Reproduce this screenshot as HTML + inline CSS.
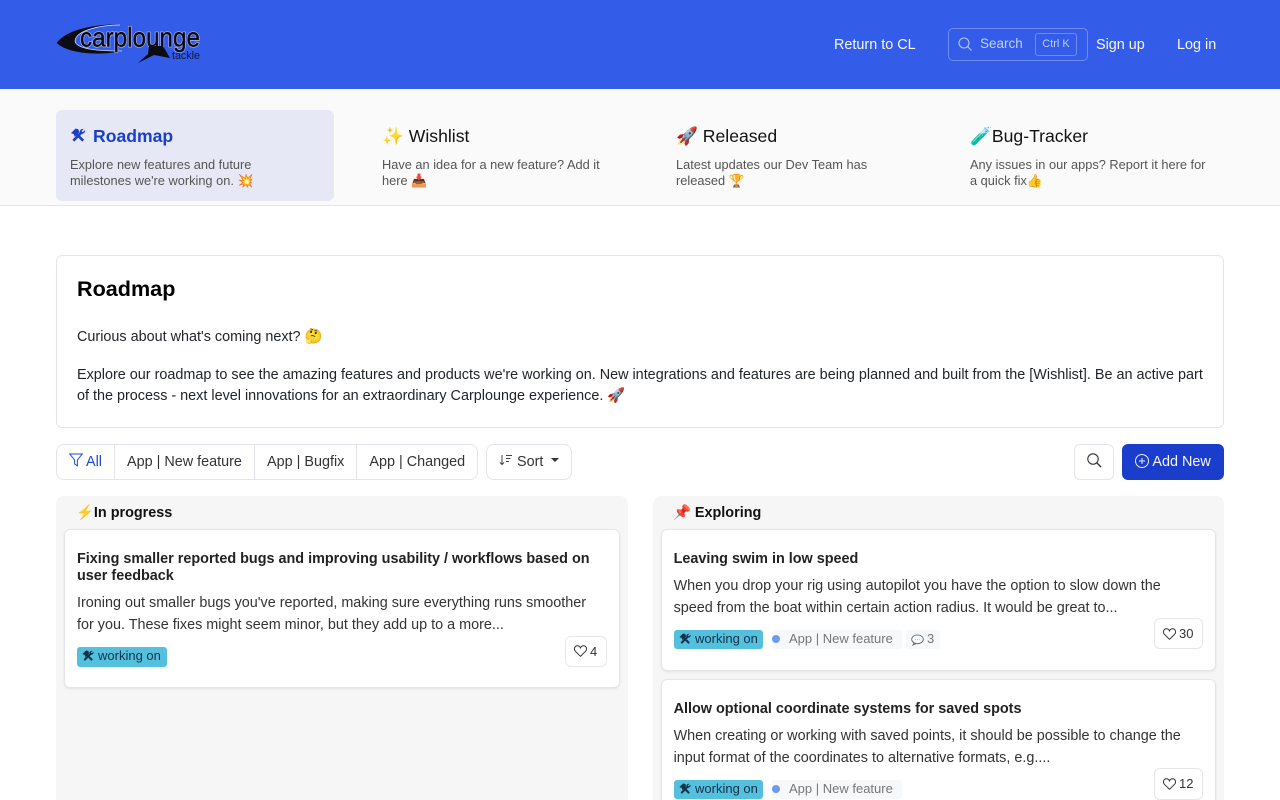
<!DOCTYPE html>
<html lang="en"><head><meta charset="utf-8"><title>Roadmap</title>
<style>
*{box-sizing:border-box}
html,body{margin:0;padding:0;width:1280px;height:800px;overflow:hidden;background:#fff}
body{font-family:"Liberation Sans",sans-serif;color:#212529;position:relative}
.a{position:absolute;white-space:nowrap}
.hdr{left:0;top:0;width:1280px;height:89px;background:#335ce8}
.nav{color:#f4f6fe;font-size:14.4px;line-height:20px;top:35px}
.sub{left:0;top:89px;width:1280px;height:117px;background:#fafafa;border-bottom:1px solid #e4e4e7}
.tt{font-size:17.6px;line-height:24px;top:124px;color:#111}
.ds{font-size:12.8px;line-height:16px;color:#555;top:157px;white-space:normal}
.box{left:56px;top:255px;width:1168px;height:173px;border:1px solid #e3e5ea;border-radius:6px;background:#fff}
.p{font-size:14.4px;line-height:21px;color:#212529;left:77px}
.group{left:56px;top:444px;width:422px;height:36px;border:1px solid #e3e5ea;border-radius:8px}
.b{font-size:14.4px;line-height:20px;top:452px;color:#333}
.sep{top:445px;width:1px;height:34px;background:#e3e5ea}
.col{top:496px;height:304px;background:#f6f6f6;border-radius:8px 8px 0 0}
.colt{font-size:14.4px;font-weight:700;line-height:20px;top:503px;color:#111}
.card{background:#fff;border:1px solid #e5e6e9;border-radius:6px;box-shadow:0 1px 2px rgba(0,0,0,.08)}
.ct{font-size:14.4px;line-height:17px;font-weight:700;color:#222}
.cb{font-size:14.4px;line-height:21.6px;color:#333}
.bdg{height:19px;background:#55bfde;border-radius:3px;font-size:13px;line-height:18px;color:#123247;padding:0 0 0 21px;width:89px}
.tag{height:19px;background:#f7f8fa;border-radius:3px;font-size:13px;line-height:18px;color:#777;padding-left:17px}
.dot{width:8px;height:8px;border-radius:50%;background:#6f9af2}
.like{height:31px;border:1px solid #e5e6e9;border-radius:6px;background:#fff;font-size:13px;line-height:30px;color:#333;padding-left:24px}
svg{position:absolute;overflow:visible}
</style></head><body>
<div class="a hdr"></div>
<svg style="left:56px;top:22px" width="146" height="44" viewBox="0 0 146 44">
<path d="M.7 21C8 11 26 3 64 2C45 3 20 8 19 19C20 26 35 29 66 29C45 34 12 32 .7 21Z" fill="#0c0c12"/>
<path d="M64 3C45 3 20 8 19 19C20 26 35 29 66 29" fill="none" stroke="#d8ddf2" stroke-width=".8"/>
<text x="24" y="24.5" font-family="'Liberation Sans',sans-serif" font-size="27" fill="none" stroke="#aab7ec" stroke-width="1.8" textLength="120" lengthAdjust="spacingAndGlyphs">carplounge</text>
<text x="24" y="24.5" font-family="'Liberation Sans',sans-serif" font-size="27" fill="#0a0a14" stroke="#0a0a14" stroke-width=".4" textLength="120" lengthAdjust="spacingAndGlyphs">carplounge</text>
<path d="M93 24L107 24L114 36L98 33L82 41L92 32Z" fill="#0c0c12"/>
<text x="116" y="37" font-family="'Liberation Sans',sans-serif" font-size="11" fill="#10183c" textLength="28" lengthAdjust="spacingAndGlyphs">tackle</text>
</svg>
<div class="a nav" style="left:834px">Return to CL</div>
<div class="a" style="left:948px;top:28px;width:140px;height:33px;border:1px solid #6f8cf0;border-radius:5px"></div>
<svg style="left:958px;top:37px" width="15" height="15" viewBox="0 0 15 15" fill="none" stroke="#b9c6f6" stroke-width="1.1"><circle cx="6" cy="6" r="5"/><path d="M9.7 9.7L13.5 13.5"/></svg>
<div class="a" style="left:980px;top:35px;font-size:13.5px;line-height:18px;color:#c3cff8">Search</div>
<div class="a" style="left:1035px;top:33px;width:42px;height:23px;border:1px solid #6f8cf0;border-radius:3px;font-size:11px;line-height:21px;text-align:center;color:#c3cff8">Ctrl K</div>
<div class="a nav" style="left:1096px">Sign up</div>
<div class="a nav" style="left:1177px">Log in</div>

<div class="a sub"></div>
<div class="a" style="left:56px;top:110px;width:278px;height:91px;background:#e6e9f5;border-radius:6px"></div>
<svg style="left:70px;top:128px" width="16" height="15" viewBox="0 0 16 16" fill="#1c3fc8" stroke="#1c3fc8"><path d="M3 13.5L12 4.5" stroke-width="2.8" fill="none"/><path d="M13.5 13.5L5 5" stroke-width="2.8" fill="none"/><path stroke="none" d="M.5 5.5L5.5.5L8.5 1.5L9.5 4.5L4.5 9.5L3.5 6.5Z"/><path stroke="none" d="M10 5C9.5 2.5 11.5.5 14 1L11.8 3.2L13 4.5L15.5 2.3C16 4.8 13.5 7 11 6Z"/></svg>
<div class="a tt" style="left:93px;font-weight:700;color:#1c3fc8">Roadmap</div>
<div class="a ds" style="left:70px;width:240px">Explore new features and future milestones we're working on. 💥</div>
<div class="a tt" style="left:382px">✨ Wishlist</div>
<div class="a ds" style="left:382px;width:240px">Have an idea for a new feature? Add it here 📥</div>
<div class="a tt" style="left:676px">🚀 Released</div>
<div class="a ds" style="left:676px;width:240px">Latest updates our Dev Team has released 🏆</div>
<div class="a tt" style="left:970px">🧪Bug-Tracker</div>
<div class="a ds" style="left:970px;width:240px">Any issues in our apps? Report it here for a quick fix👍</div>

<div class="a box"></div>
<div class="a" style="left:77px;top:275px;font-size:21.6px;line-height:27px;font-weight:700;color:#000">Roadmap</div>
<div class="a p" style="top:327px">Curious about what's coming next? 🤔</div>
<div class="a p" style="top:365px;width:1130px;white-space:normal">Explore our roadmap to see the amazing features and products we're working on. New integrations and features are being planned and built from the [Wishlist]. Be an active part of the process - next level innovations for an extraordinary Carplounge experience. 🚀</div>

<div class="a group"></div>
<div class="a sep" style="left:114px"></div><div class="a sep" style="left:254px"></div><div class="a sep" style="left:356px"></div>
<svg style="left:69px;top:453px" width="14" height="14" viewBox="0 0 14 14" fill="none" stroke="#1c48d8" stroke-width="1"><path d="M.8 1H13.2L8.4 7V12.8L5.6 11V7Z"/></svg>
<div class="a b" style="left:86px;color:#1c48d8">All</div>
<div class="a b" style="left:127px">App | New feature</div>
<div class="a b" style="left:267px">App | Bugfix</div>
<div class="a b" style="left:369.4px">App | Changed</div>
<div class="a" style="left:486px;top:444px;width:86px;height:36px;border:1px solid #e3e5ea;border-radius:8px"></div>
<svg style="left:499px;top:454px" width="14" height="13" viewBox="0 0 14 13" fill="none" stroke="#444" stroke-width="1"><path d="M3 1V10.5M1 8.5L3 10.5L5 8.5M7 1.5H13M7 4.5H11.5M7 7.5H10"/></svg>
<div class="a b" style="left:517px">Sort</div>
<div class="a" style="left:551px;top:458px;border-left:4px solid transparent;border-right:4px solid transparent;border-top:4.5px solid #333"></div>

<div class="a" style="left:1074px;top:444px;width:40px;height:36px;border:1px solid #e3e5ea;border-radius:6px"></div>
<svg style="left:1087px;top:453px" width="15" height="15" viewBox="0 0 15 15" fill="none" stroke="#333" stroke-width="1.1"><circle cx="6" cy="6" r="5.2"/><path d="M9.8 9.8L14 14" stroke-width="1.4"/></svg>
<div class="a" style="left:1122px;top:444px;width:102px;height:36px;background:#1a3ecb;border-radius:6px"></div>
<svg style="left:1135px;top:454px" width="14" height="14" viewBox="0 0 14 14" fill="none" stroke="#e8edfc" stroke-width="1"><circle cx="7" cy="7" r="6.5"/><path d="M7 4V10M4 7H10"/></svg>
<div class="a b" style="left:1152.4px;color:#f2f5fe">Add New</div>

<div class="a col" style="left:56px;width:572px"></div>
<div class="a col" style="left:653px;width:571px"></div>
<div class="a colt" style="left:76px">⚡In progress</div>
<div class="a colt" style="left:673px">📌 Exploring</div>

<div class="a card" style="left:64px;top:529px;width:556px;height:159px"></div>
<div class="a ct" style="left:77px;top:551px;width:530px;white-space:normal">Fixing smaller reported bugs and improving usability / workflows based on user feedback</div>
<div class="a cb" style="left:77px;top:593px;width:515px;white-space:normal">Ironing out smaller bugs you've reported, making sure everything runs smoother for you. These fixes might seem minor, but they add up to a more...</div>
<div class="a bdg" style="left:77px;top:647px;height:20px;width:90px">working on</div>
<svg style="left:82px;top:650px" width="12" height="12" viewBox="0 0 16 16" fill="#123247" stroke="#123247"><path d="M3 13.5L12 4.5" stroke-width="2.6" fill="none"/><path d="M13.5 13.5L5 5" stroke-width="2.6" fill="none"/><path stroke="none" d="M.5 5.5L5.5.5L8.5 1.5L9.5 4.5L4.5 9.5L3.5 6.5Z"/><path stroke="none" d="M10 5C9.5 2.5 11.5.5 14 1L11.8 3.2L13 4.5L15.5 2.3C16 4.8 13.5 7 11 6Z"/></svg>
<div class="a like" style="left:565px;top:636px;width:42px">4</div>
<svg style="left:574px;top:645px" width="13" height="12" viewBox="0 0 13 12" fill="none" stroke="#333"><path d="M6.5 11.3L1.3 6.2C-.6 3.8 1 .8 3.4.8 4.8.8 5.9 1.6 6.5 2.9 7.1 1.6 8.2.8 9.6.8 12 .8 13.6 3.8 11.7 6.2Z"/></svg>

<div class="a card" style="left:661px;top:529px;width:555px;height:142px"></div>
<div class="a ct" style="left:673.6px;top:551px">Leaving swim in low speed</div>
<div class="a cb" style="left:673.6px;top:576px;width:530px;white-space:normal">When you drop your rig using autopilot you have the option to slow down the speed from the boat within certain action radius. It would be great to...</div>
<div class="a bdg" style="left:674px;top:630px">working on</div>
<svg style="left:679px;top:633px" width="12" height="12" viewBox="0 0 16 16" fill="#123247" stroke="#123247"><path d="M3 13.5L12 4.5" stroke-width="2.6" fill="none"/><path d="M13.5 13.5L5 5" stroke-width="2.6" fill="none"/><path stroke="none" d="M.5 5.5L5.5.5L8.5 1.5L9.5 4.5L4.5 9.5L3.5 6.5Z"/><path stroke="none" d="M10 5C9.5 2.5 11.5.5 14 1L11.8 3.2L13 4.5L15.5 2.3C16 4.8 13.5 7 11 6Z"/></svg>
<div class="a tag" style="left:772px;top:630px;width:130px">App | New feature</div><div class="a dot" style="left:772px;top:635px"></div>
<div class="a tag" style="left:906px;top:630px;width:34px;padding-left:21px">3</div>
<svg style="left:911px;top:634px" width="13" height="12" viewBox="0 0 13 12" fill="none" stroke="#666" stroke-width=".9"><ellipse cx="6.5" cy="5.3" rx="5.8" ry="4.4"/><path d="M3 9L2 11L5 9.6M4 5.3H4.4M6.3 5.3H6.7M8.6 5.3H9"/></svg>
<div class="a like" style="left:1154px;top:618px;width:49px">30</div>
<svg style="left:1163px;top:628px" width="13" height="12" viewBox="0 0 13 12" fill="none" stroke="#333"><path d="M6.5 11.3L1.3 6.2C-.6 3.8 1 .8 3.4.8 4.8.8 5.9 1.6 6.5 2.9 7.1 1.6 8.2.8 9.6.8 12 .8 13.6 3.8 11.7 6.2Z"/></svg>

<div class="a card" style="left:661px;top:679px;width:555px;height:142px"></div>
<div class="a ct" style="left:673.6px;top:701px">Allow optional coordinate systems for saved spots</div>
<div class="a cb" style="left:673.6px;top:726px;width:530px;white-space:normal">When creating or working with saved points, it should be possible to change the input format of the coordinates to alternative formats, e.g....</div>
<div class="a bdg" style="left:674px;top:780px">working on</div>
<svg style="left:679px;top:783px" width="12" height="12" viewBox="0 0 16 16" fill="#123247" stroke="#123247"><path d="M3 13.5L12 4.5" stroke-width="2.6" fill="none"/><path d="M13.5 13.5L5 5" stroke-width="2.6" fill="none"/><path stroke="none" d="M.5 5.5L5.5.5L8.5 1.5L9.5 4.5L4.5 9.5L3.5 6.5Z"/><path stroke="none" d="M10 5C9.5 2.5 11.5.5 14 1L11.8 3.2L13 4.5L15.5 2.3C16 4.8 13.5 7 11 6Z"/></svg>
<div class="a tag" style="left:772px;top:780px;width:130px">App | New feature</div><div class="a dot" style="left:772px;top:785px"></div>
<div class="a like" style="left:1154px;top:768px;width:49px;height:32px">12</div>
<svg style="left:1163px;top:778px" width="13" height="12" viewBox="0 0 13 12" fill="none" stroke="#333"><path d="M6.5 11.3L1.3 6.2C-.6 3.8 1 .8 3.4.8 4.8.8 5.9 1.6 6.5 2.9 7.1 1.6 8.2.8 9.6.8 12 .8 13.6 3.8 11.7 6.2Z"/></svg>
</body></html>
